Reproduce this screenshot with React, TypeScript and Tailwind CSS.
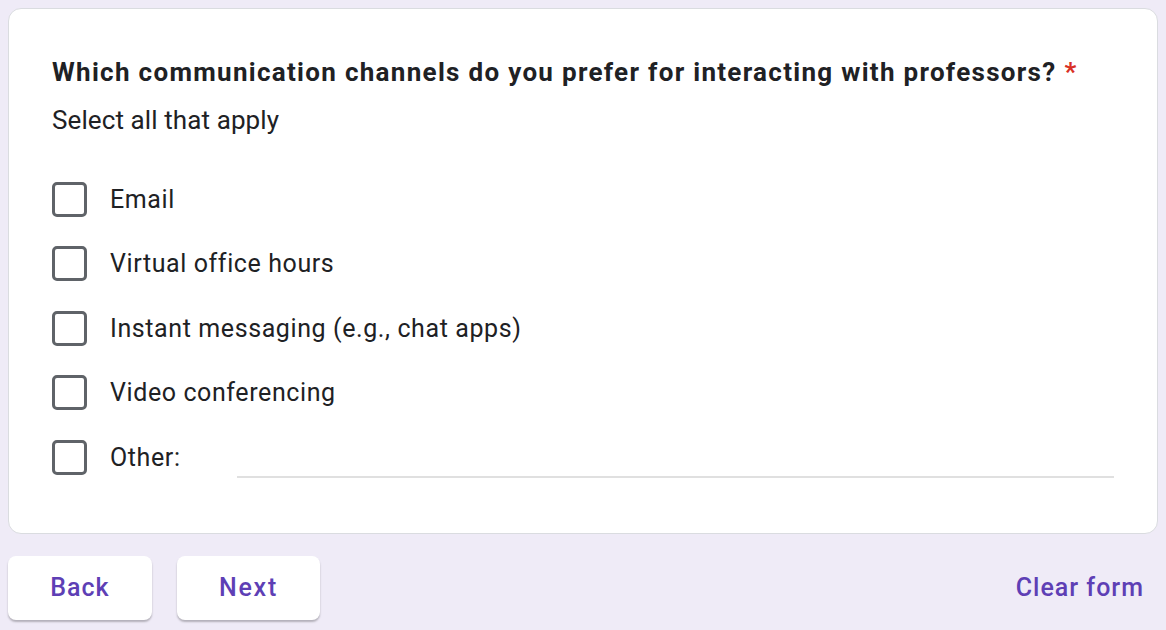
import React from "react";

const options = [
  "Email",
  "Virtual office hours",
  "Instant messaging (e.g., chat apps)",
  "Video conferencing",
];

function Box() {
  return (
    <div className="w-[35px] h-[35px] shrink-0 rounded-[5px] border-[3px] border-[#5f6368] bg-white" />
  );
}

export default function App() {
  return (
    <div
      className="w-[1166px] h-[630px] bg-[#efebf7] overflow-hidden flex flex-col"
      style={{ fontFamily: "Roboto, 'Liberation Sans', sans-serif" }}
    >
      <div className="mx-[8px] mt-[8px] h-[526px] shrink-0 bg-white rounded-[13px] border border-[#dadce0] pl-[43px] pr-[43px] pt-[43px]">
        <div className="text-[26px] leading-[40px] font-bold text-[#202124] tracking-[1.3px] whitespace-nowrap">
          Which communication channels do you prefer for interacting with professors?
          <span className="text-[#d93025] ml-[8px] tracking-normal">*</span>
        </div>
        <div className="text-[26px] leading-[30px] text-[#202124] mt-[13px] tracking-[0.1px]">
          Select all that apply
        </div>
        <div className="mt-[32px] flex flex-col">
          {options.map((o) => (
            <div key={o} className="h-[64.5px] flex items-center">
              <Box />
              <span className="ml-[23px] text-[25px] text-[#202124] tracking-[0.6px]">{o}</span>
            </div>
          ))}
          <div className="h-[64.5px] flex items-center">
            <Box />
            <span className="ml-[23px] text-[25px] text-[#202124] tracking-[0.6px] w-[127px]">Other:</span>
            <div className="flex-1 self-stretch flex items-end pb-[12px]">
              <div className="w-full h-[2px] bg-[#e0e0e0]" />
            </div>
          </div>
        </div>
      </div>
      <div className="flex items-center mt-[22px] px-[8px]">
        <button className="w-[144px] h-[64px] bg-white rounded-[8px] shadow-[0_2px_2px_rgba(0,0,0,0.25)] text-[#5e3fb5] text-[25px] font-medium tracking-[1px]">
          Back
        </button>
        <button className="ml-[25px] w-[143px] h-[64px] bg-white rounded-[8px] shadow-[0_2px_2px_rgba(0,0,0,0.25)] text-[#5e3fb5] text-[25px] font-medium tracking-[1.8px]">
          Next
        </button>
        <div className="flex-1" />
        <span className="text-[#5e3fb5] text-[25px] font-medium tracking-[1px] mr-[14px]">Clear form</span>
      </div>
    </div>
  );
}
